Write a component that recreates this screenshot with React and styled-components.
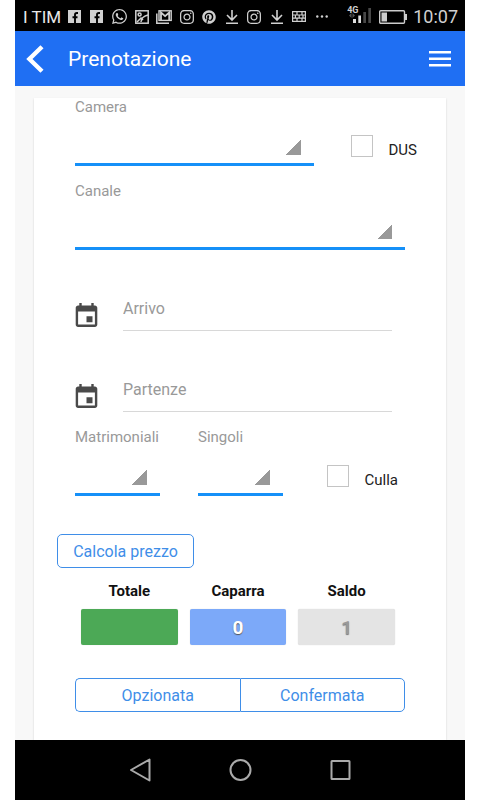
import React from 'react'
import styled, { createGlobalStyle } from 'styled-components'
import { FaInstagram, FaPinterest, FaWhatsapp } from 'react-icons/fa'

const FacebookIcon = () => (
  <svg width="13" height="13" viewBox="0 0 13 13">
    <rect width="13" height="13" fill="currentColor" />
    <path d="M10 3H8.800Q7 3 7 4.800V13M4.500 7.200h5" fill="none" stroke="#000" strokeWidth="1.900" />
  </svg>
)

const WhatsappIcon = () => <FaWhatsapp size={17} />

const PictureIcon = () => (
  <svg width="14" height="14" viewBox="0 0 14 14" fill="none" stroke="currentColor" strokeWidth="1.5">
    <rect x="0.8" y="0.8" width="12.4" height="12.4" />
    <circle cx="4.6" cy="4.4" r="1.5" />
    <path d="M2 12l4-4 2 2M6 12c0-4 3-6 7-7" />
  </svg>
)

const MailIcon = () => (
  <svg width="16" height="14" viewBox="0 0 16 14" fill="none" stroke="currentColor">
    <path d="M0.8 3.5v9.7H13" strokeWidth="1.5" />
    <rect x="3" y="0.8" width="12.2" height="9.6" strokeWidth="1.4" />
    <path d="M5 10V2.5l4.1 3.6 4.1-3.6V10" strokeWidth="1.8" />
  </svg>
)

const PinterestIcon = () => <FaPinterest size={14} />

const DownloadIcon = () => (
  <svg width="14" height="14" viewBox="0 0 14 14" fill="none" stroke="currentColor" strokeWidth="1.6">
    <path d="M7 0v9.5M2 5l5 5 5-5M1 13.2h12" />
  </svg>
)

const WallIcon = () => (
  <svg width="14" height="11" viewBox="0 0 14 11" fill="none" stroke="currentColor" strokeWidth="1.2">
    <path d="M0.6 0.6h12.8v9.8H0.6zM0.6 4h12.8M0.6 7.2h12.8M5 0.6V4M10 0.6V4M3.4 4v3.2M7.2 4v3.2M11 4v3.2M5 7.2v3.2M10 7.2v3.2" />
  </svg>
)

const MoreIcon = () => (
  <svg width="12" height="3" viewBox="0 0 12 3" fill="currentColor">
    <circle cx="1.3" cy="1.5" r="1.2" />
    <circle cx="6" cy="1.5" r="1.2" />
    <circle cx="10.7" cy="1.5" r="1.2" />
  </svg>
)

const SignalIcon = () => (
  <svg width="24" height="16" viewBox="0 0 24 16">
    <path d="M4.500 6L2 8.500 4.500 11zM5.500 6L8 8.500 5.500 11z" fill="#555" />
    <path d="M6 12h3v4H6zM11.300 8.500h2.700V16h-2.700z" fill="#e0e0e0" />
    <path d="M16.300 5H19v11h-2.700zM21.300 1H24v15h-2.700z" fill="#484848" />
  </svg>
)

const BatteryIcon = () => (
  <svg width="28" height="14" viewBox="0 0 28 14">
    <rect x="0.7" y="0.7" width="24.8" height="12.600" rx="1" fill="none" stroke="#ccc" strokeWidth="1.4" />
    <path d="M2.500 2.500H8v9H2.500zM26 4h2v6h-2z" fill="#ccc" />
  </svg>
)

const BackIcon = () => (
  <svg width="18" height="28" viewBox="0 0 18 28" fill="none" stroke="#fff" strokeWidth="4.4">
    <path d="M16 1.700L3.400 14 16 26.300" />
  </svg>
)

const MenuIcon = () => (
  <svg width="22" height="16" viewBox="0 0 22 16" fill="#fff">
    <path d="M0 0h22v2.400H0zM0 6.500h22v2.400H0zM0 13h22v2.400H0z" />
  </svg>
)

const CalendarIcon = () => (
  <svg width="23" height="24" viewBox="3 1 18 20" fill="#4a4a4a">
    <path d="M17 12h-5v5h5v-5zM16 1v2H8V1H6v2H5c-1.110 0-1.990.9-1.990 2L3 19c0 1.100.890 2 2 2h14c1.100 0 2-.9 2-2V5c0-1.100-.9-2-2-2h-1V1h-2zm3 18H5V8h14v11z" />
  </svg>
)

const notifications = [
  FacebookIcon, FacebookIcon, WhatsappIcon, PictureIcon, MailIcon, FaInstagram,
  PinterestIcon, DownloadIcon, FaInstagram, DownloadIcon, WallIcon, MoreIcon
]

const totals = [
  { id: 'totale', label: 'Totale', value: '', tone: 'green' },
  { id: 'caparra', label: 'Caparra', value: '0', tone: 'blue' },
  { id: 'saldo', label: 'Saldo', value: '1', tone: 'grey' }
]

const SelectField = ({ id, label, width }) => (
  <Field $width={width}>
    <FieldLabel htmlFor={id}>{label}</FieldLabel>
    <Select id={id} defaultValue="">
      <option value=""></option>
    </Select>
  </Field>
)

const DateField = ({ id, label }) => (
  <DateRow>
    <DateIcon htmlFor={id}><CalendarIcon /></DateIcon>
    <DateInput id={id} type="text" placeholder={label} aria-label={label} />
  </DateRow>
)

const CheckField = ({ id, label }) => (
  <Check htmlFor={id}>
    <CheckBox id={id} type="checkbox" />
    <CheckText>{label}</CheckText>
  </Check>
)

const App = () => {
  return (
    <>
      <GlobalStyle />
      <Screen>
        <StatusBar>
          <Carrier>I TIM</Carrier>
          <Notifications>
            {notifications.map((Icon, index) => (
              <Notification key={index}><Icon /></Notification>
            ))}
          </Notifications>
          <Signal>
            <Network>4G</Network>
            <SignalIcon />
          </Signal>
          <BatteryIcon />
          <Clock>10:07</Clock>
        </StatusBar>

        <Header>
          <IconButton type="button" aria-label="Indietro"><BackIcon /></IconButton>
          <Title>Prenotazione</Title>
          <IconButton type="button" aria-label="Menu"><MenuIcon /></IconButton>
        </Header>

        <Content>
          <Card>
            <Row>
              <SelectField id="camera" label="Camera" />
              <CheckField id="dus" label="DUS" />
            </Row>
            <Row $end="12px">
              <SelectField id="canale" label="Canale" />
            </Row>
            <DateField id="arrivo" label="Arrivo" />
            <DateField id="partenze" label="Partenze" />
            <Row $end="19px">
              <SmallFields>
                <SelectField id="matrimoniali" label="Matrimoniali" width="85px" />
                <SelectField id="singoli" label="Singoli" width="85px" />
              </SmallFields>
              <CheckField id="culla" label="Culla" />
            </Row>

            <PriceButton type="button">Calcola prezzo</PriceButton>

            <Totals>
              {totals.map(({ id, label, value, tone }) => (
                <Total key={id}>
                  <TotalLabel id={id}>{label}</TotalLabel>
                  <TotalButton type="button" aria-labelledby={id} $tone={tone}>{value}</TotalButton>
                </Total>
              ))}
            </Totals>

            <Segment>
              <SegmentButton type="button">Opzionata</SegmentButton>
              <SegmentButton type="button">Confermata</SegmentButton>
            </Segment>
          </Card>
        </Content>

        <NavBar>
          <NavButton type="button" aria-label="Back">
            <svg width="24" height="24" viewBox="0 0 24 24"><path d="M21.500 1.500v21L3 12z" /></svg>
          </NavButton>
          <NavButton type="button" aria-label="Home">
            <svg width="24" height="24" viewBox="0 0 24 24"><circle cx="12.500" cy="12" r="10" /></svg>
          </NavButton>
          <NavButton type="button" aria-label="Recents">
            <svg width="24" height="24" viewBox="0 0 24 24"><rect x="3.500" y="3" width="18" height="18" rx="0.5" /></svg>
          </NavButton>
        </NavBar>
      </Screen>
    </>
  )
}

export default App

const GlobalStyle = createGlobalStyle`
* {
  box-sizing: border-box;
}
body {
  margin: 0;
  background: #fff;
  font-family: Roboto, 'Liberation Sans', sans-serif;
}
button, input, select {
  font-family: inherit;
  margin: 0;
}
svg {
  display: block;
  flex-shrink: 0;
}
`

const Screen = styled.div`
display: flex;
flex-direction: column;
min-height: 100vh;
margin: 0 15px;
`

const StatusBar = styled.div`
display: flex;
align-items: center;
height: 31px;
padding: 2px 7px 0 8px;
background: #000;
color: #d0d0d0;
`

const Carrier = styled.span`
width: 40px;
font-size: 17px;
line-height: 20px;
white-space: nowrap;
color: #e8e8e8;
`

const Notifications = styled.div`
display: grid;
grid-template-columns: repeat(12, 1fr);
width: 270px;
`

const Notification = styled.span`
display: flex;
align-items: center;
justify-content: center;
font-size: 16px;
`

const Signal = styled.div`
display: flex;
flex-direction: column;
margin: 0 8px 0 auto;
padding-bottom: 4px;
`

const Network = styled.span`
height: 1px;
font-size: 9px;
line-height: 9px;
font-weight: 700;
`

const Clock = styled.span`
margin-left: 6px;
font-size: 18px;
line-height: 20px;
`

const Header = styled.header`
display: flex;
align-items: center;
height: 55px;
padding: 0 14px 0 11px;
background: #1f6ff3;
`

const IconButton = styled.button`
padding: 0;
border: 0;
background: none;
cursor: pointer;
`

const Title = styled.h1`
flex: 1;
margin: 0 0 0 24px;
font-size: 21px;
line-height: 28px;
font-weight: 400;
color: #fff;
`

const Content = styled.main`
display: flex;
flex: 1;
padding: 12px 19px 0;
background: #f8f8f8;
`

const Card = styled.form`
flex: 1;
padding: 0 29px 28px 23px;
background: #fff;
box-shadow: 0 1px 2px rgba(0, 0, 0, 0.15);
`

const Row = styled.div`
display: flex;
justify-content: space-between;
gap: 37px;
padding-left: 18px;
padding-right: ${props => props.$end || '0'};
margin-bottom: 16px;
`

const SmallFields = styled.div`
display: flex;
gap: 38px;
`

const Field = styled.div`
display: flex;
flex-direction: column;
flex: ${props => props.$width ? `0 0 ${props.$width}` : '1'};
`

const FieldLabel = styled.label`
font-size: 15px;
line-height: 18px;
color: #999;
`

const Select = styled.select`
appearance: none;
width: 100%;
height: 50px;
padding: 0 32px 0 0;
border: 0;
border-bottom: 3px solid #1590f8;
border-radius: 0;
background: linear-gradient(135deg, transparent 50%, #999 50%) no-repeat right 13px top 24px / 15px 15px;
font-size: 16px;
`

const Check = styled.label`
display: flex;
align-self: flex-start;
gap: 16px;
margin-top: 37px;
`

const CheckBox = styled.input`
appearance: none;
width: 22px;
height: 22px;
border: 1px solid #c4c4c4;
background: #fff;
`

const CheckText = styled.span`
padding-top: 6px;
font-size: 15px;
line-height: 18px;
color: #222;
`

const DateRow = styled.div`
display: flex;
align-items: flex-end;
gap: 25px;
margin-bottom: 16px;
padding: 21px 25px 0 18px;
`

const DateIcon = styled.label`
padding-bottom: 4px;
`

const DateInput = styled.input`
flex: 1;
min-width: 0;
height: 44px;
padding: 0;
border: 0;
border-bottom: 1px solid #d8d8d8;
background: none;
font-size: 16px;
color: #222;

&::placeholder {
  color: #999;
  opacity: 1;
}
`

const OutlineButton = styled.button`
height: 34px;
padding: 2px 0 0;
border: 1px solid #3f8ee8;
background: #fff;
font-size: 16px;
line-height: 24px;
color: #3f8ee8;
cursor: pointer;
`

const PriceButton = styled(OutlineButton)`
display: block;
width: 137px;
margin: 38px 0 14px;
border-radius: 5px;
`

const Totals = styled.div`
display: grid;
grid-template-columns: repeat(3, 1fr);
gap: 12px;
padding: 0 22px 0 24px;
`

const Total = styled.div`
display: flex;
flex-direction: column;
gap: 9px;
`

const TotalLabel = styled.strong`
font-size: 15px;
line-height: 18px;
text-align: center;
color: #111;
`

const tones = {
  green: { background: '#4ca956', color: '#fff', shadow: '#555' },
  blue: { background: '#7ca9f9', color: '#fff', shadow: '#555' },
  grey: { background: '#e4e4e4', color: '#999', shadow: '#777' }
}

const TotalButton = styled.button`
height: 36px;
padding: 0;
border: 0;
border-radius: 2px;
background: ${props => tones[props.$tone].background};
box-shadow: 0 0 1px rgba(0, 0, 0, 0.2);
color: ${props => tones[props.$tone].color};
text-shadow: 0 1px 1px ${props => tones[props.$tone].shadow};
font-size: 19px;
font-weight: 700;
`

const Segment = styled.div`
display: flex;
margin: 33px 12px 0 18px;
`

const SegmentButton = styled(OutlineButton)`
flex: 1;

&:first-child {
  border-right: 0;
  border-radius: 5px 0 0 5px;
}
&:last-child {
  border-radius: 0 5px 5px 0;
}
`

const NavBar = styled.nav`
display: flex;
align-items: center;
justify-content: center;
gap: 76px;
height: 60px;
background: #000;
`

const NavButton = styled.button`
padding: 0;
border: 0;
background: none;

svg {
  fill: none;
  stroke: #aaa;
  stroke-width: 2;
  stroke-linejoin: round;
}
`
